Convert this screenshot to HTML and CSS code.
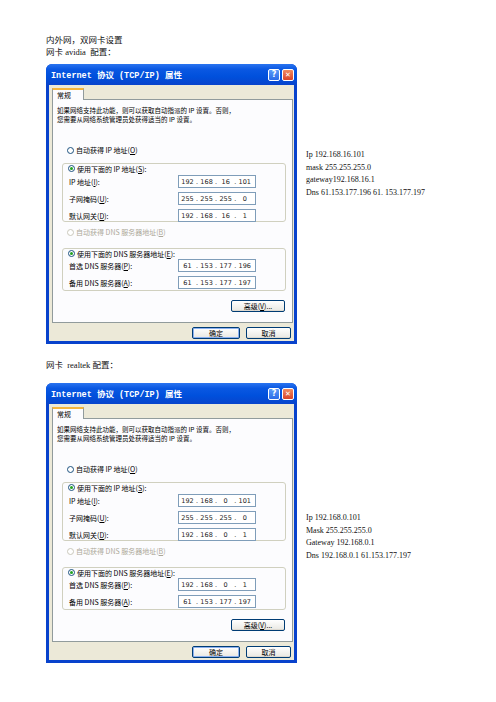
FILE: index.html
```html
<!DOCTYPE html>
<html lang="zh-CN">
<head>
  <meta charset="UTF-8" />
  <title>内外网，双网卡设置</title>
  <link rel="stylesheet" href="styles.css">
</head>
<body>
  <div class="doc">
    <p class="line">内外网，双网卡设置</p>
    <p class="line">网卡 avidia &nbsp;配置：</p>

    <!-- 第一块网卡 -->
    <div class="shot">
      <div class="win">
        <div class="title">
          <span>Internet 协议 (TCP/IP) 属性</span>
          <span class="tbtns"><span class="tb help">?</span><span class="tb close">✕</span></span>
        </div>
        <div class="body">
          <div class="tab">常规</div>
          <div class="panel">
            <p class="desc">如果网络支持此功能，则可以获取自动指派的 IP 设置。否则，</p>
            <p class="desc">您需要从网络系统管理员处获得适当的 IP 设置。</p>
            <div class="radio first"><i></i><span>自动获得 IP 地址(<u>O</u>)</span></div>
            <div class="group g1">
              <div class="radio legend"><i class="on"></i><span>使用下面的 IP 地址(<u>S</u>):</span></div>
              <div class="rows">
                <div class="row"><span class="lbl">IP 地址(<u>I</u>):</span><span class="ip"><b>192</b>.<b>168</b>.<b>16</b>.<b>101</b></span></div>
                <div class="row"><span class="lbl">子网掩码(<u>U</u>):</span><span class="ip"><b>255</b>.<b>255</b>.<b>255</b>.<b>0</b></span></div>
                <div class="row"><span class="lbl">默认网关(<u>D</u>):</span><span class="ip"><b>192</b>.<b>168</b>.<b>16</b>.<b>1</b></span></div>
              </div>
            </div>
            <div class="radio off dns-auto"><i></i><span>自动获得 DNS 服务器地址(<u>B</u>)</span></div>
            <div class="group g2">
              <div class="radio legend"><i class="on"></i><span>使用下面的 DNS 服务器地址(<u>E</u>):</span></div>
              <div class="rows">
                <div class="row"><span class="lbl">首选 DNS 服务器(<u>P</u>):</span><span class="ip"><b>61</b>.<b>153</b>.<b>177</b>.<b>196</b></span></div>
                <div class="row"><span class="lbl">备用 DNS 服务器(<u>A</u>):</span><span class="ip"><b>61</b>.<b>153</b>.<b>177</b>.<b>197</b></span></div>
              </div>
            </div>
            <div class="adv-wrap"><span class="btn adv"><span>高级(<u>V</u>)...</span></span></div>
          </div>
          <div class="footer">
            <span class="btn ok">确定</span>
            <span class="btn">取消</span>
          </div>
        </div>
      </div>
      <div class="notes notes-a">
        <p>Ip 192.168.16.101</p>
        <p>mask 255.255.255.0</p>
        <p>gateway192.168.16.1</p>
        <p>Dns 61.153.177.196 61. 153.177.197</p>
      </div>
    </div>

    <p class="line caption2">网卡 &nbsp;realtek 配置：</p>

    <!-- 第二块网卡 -->
    <div class="shot">
      <div class="win">
        <div class="title">
          <span>Internet 协议 (TCP/IP) 属性</span>
          <span class="tbtns"><span class="tb help">?</span><span class="tb close">✕</span></span>
        </div>
        <div class="body">
          <div class="tab">常规</div>
          <div class="panel">
            <p class="desc">如果网络支持此功能，则可以获取自动指派的 IP 设置。否则，</p>
            <p class="desc">您需要从网络系统管理员处获得适当的 IP 设置。</p>
            <div class="radio first"><i></i><span>自动获得 IP 地址(<u>O</u>)</span></div>
            <div class="group g1">
              <div class="radio legend"><i class="on"></i><span>使用下面的 IP 地址(<u>S</u>):</span></div>
              <div class="rows">
                <div class="row"><span class="lbl">IP 地址(<u>I</u>):</span><span class="ip"><b>192</b>.<b>168</b>.<b>0</b>.<b>101</b></span></div>
                <div class="row"><span class="lbl">子网掩码(<u>U</u>):</span><span class="ip"><b>255</b>.<b>255</b>.<b>255</b>.<b>0</b></span></div>
                <div class="row"><span class="lbl">默认网关(<u>D</u>):</span><span class="ip"><b>192</b>.<b>168</b>.<b>0</b>.<b>1</b></span></div>
              </div>
            </div>
            <div class="radio off dns-auto"><i></i><span>自动获得 DNS 服务器地址(<u>B</u>)</span></div>
            <div class="group g2">
              <div class="radio legend"><i class="on"></i><span>使用下面的 DNS 服务器地址(<u>E</u>):</span></div>
              <div class="rows">
                <div class="row"><span class="lbl">首选 DNS 服务器(<u>P</u>):</span><span class="ip"><b>192</b>.<b>168</b>.<b>0</b>.<b>1</b></span></div>
                <div class="row"><span class="lbl">备用 DNS 服务器(<u>A</u>):</span><span class="ip"><b>61</b>.<b>153</b>.<b>177</b>.<b>197</b></span></div>
              </div>
            </div>
            <div class="adv-wrap"><span class="btn adv"><span>高级(<u>V</u>)...</span></span></div>
          </div>
          <div class="footer">
            <span class="btn ok">确定</span>
            <span class="btn">取消</span>
          </div>
        </div>
      </div>
      <div class="notes notes-b">
        <p>Ip 192.168.0.101</p>
        <p>Mask 255.255.255.0</p>
        <p>Gateway 192.168.0.1</p>
        <p>Dns 192.168.0.1 61.153.177.197</p>
      </div>
    </div>
  </div>
</body>
</html>
```

FILE: styles.css
```css
body {
  margin: 0;
  background: #fff;
  font-family: "Liberation Serif", "Noto Sans CJK SC", serif;
  color: #111;
}

p {
  margin: 0;
}

.doc {
  padding: 34px 0 0 46px;
}

.line {
  font-size: 8.5px;
  line-height: 12px;
  height: 12px;
  white-space: nowrap;
}

.caption2 {
  margin-top: 15px;
}

.shot {
  display: flex;
  align-items: flex-start;
  margin-top: 6px;
}

.caption2 + .shot {
  margin-top: 12px;
}

/* 右侧说明 */
.notes {
  margin-left: 9px;
  font-size: 8px;
  line-height: 12.5px;
  white-space: nowrap;
}
.notes-a {
  padding-top: 85px;
}
.notes-b {
  padding-top: 129px;
}

/* XP 对话框 */
.win {
  width: 251px;
  height: 280px;
  box-sizing: border-box;
  background: #0842cc;
  border-radius: 6px 6px 0 0;
  padding: 0 3px 3px;
  display: flex;
  flex-direction: column;
  font-family: "Noto Sans CJK SC", "DejaVu Sans", sans-serif;
  font-size: 7px;
  color: #000;
}

.title {
  height: 21px;
  margin: 0 -3px;
  padding: 0 3px 0 5px;
  border-radius: 6px 6px 0 0;
  background: linear-gradient(#2a74f0 0%, #0a58e2 25%, #0050dc 60%, #0844cc 100%);
  color: #fff;
  font-family: "Liberation Mono", "Noto Sans CJK SC", monospace;
  font-weight: bold;
  font-size: 8.5px;
  display: flex;
  align-items: center;
  justify-content: space-between;
  white-space: nowrap;
}

.tbtns {
  display: flex;
  gap: 2px;
}

.tb {
  width: 12px;
  height: 12px;
  box-sizing: border-box;
  border: 1px solid #fff;
  border-radius: 2px;
  display: flex;
  align-items: center;
  justify-content: center;
  font-family: "DejaVu Sans", sans-serif;
  font-size: 8px;
  font-weight: bold;
  color: #fff;
}

.help {
  background: linear-gradient(#5a9af8, #2a6ae8);
}

.close {
  background: linear-gradient(#f08a60, #d8442a);
  font-size: 7px;
}

.body {
  flex: 1;
  background: #ece9d8;
  padding: 2px 3px 0 3px;
}

.tab {
  width: 32px;
  height: 12px;
  box-sizing: border-box;
  border: 1px solid #919b9c;
  border-top: 2px solid #f5b53c;
  border-bottom: none;
  background: #fcfcfe;
  padding-left: 4px;
  font-size: 7px;
  line-height: 10px;
  position: relative;
  top: 1px;
}

.panel {
  width: 241px;
  height: 224px;
  box-sizing: border-box;
  border: 1px solid #919b9c;
  background: #fcfcfe;
}

.desc {
  padding-left: 4px;
  font-size: 6.5px;
  line-height: 9px;
  height: 9px;
  white-space: nowrap;
}

.desc:first-child {
  margin-top: 6px;
}

.radio {
  height: 10px;
  display: flex;
  align-items: center;
  gap: 2px;
  white-space: nowrap;
}

.radio i {
  width: 7px;
  height: 7px;
  box-sizing: border-box;
  border: 1px solid #1c5180;
  border-radius: 50%;
  background: #fff;
  position: relative;
}

.radio i.on::after {
  content: "";
  position: absolute;
  left: 1px;
  top: 1px;
  width: 3px;
  height: 3px;
  border-radius: 50%;
  background: #21a121;
}

.radio.off {
  color: #aca899;
}
.radio.off i {
  border-color: #cac8bb;
}

.first {
  margin: 21px 0 0 14px;
}

.group {
  margin-left: 9px;
  width: 224px;
  box-sizing: border-box;
  border: 1px solid #d0d0bf;
  border-radius: 3px;
}

.g1 {
  margin-top: 8px;
  height: 59px;
}

.g2 {
  margin-top: 11px;
  height: 43px;
}

.legend {
  display: inline-flex;
  margin: -6px 0 0 4px;
  padding: 0 2px 0 1px;
  background: #fcfcfe;
}

.dns-auto {
  margin: 5px 0 0 14px;
}

.rows {
  display: flex;
  flex-direction: column;
  gap: 4px;
  padding-top: 1px;
}

.g2 .rows {
  padding-top: 0;
}

.row {
  display: flex;
  align-items: center;
  height: 13px;
}

.lbl {
  width: 109px;
  padding-left: 6px;
  white-space: nowrap;
}

.ip {
  width: 78px;
  height: 13px;
  box-sizing: border-box;
  border: 1px solid #7f9db9;
  background: #fff;
  display: flex;
  align-items: center;
  font-family: "DejaVu Sans", sans-serif;
  font-size: 6.5px;
  color: #222;
}

.ip b {
  font-weight: normal;
  width: 17px;
  text-align: center;
}

.adv-wrap {
  display: flex;
  justify-content: flex-end;
  margin: 9px 7px 0 0;
}

.btn {
  height: 12px;
  box-sizing: border-box;
  border: 1px solid #003c74;
  border-radius: 2px;
  background: linear-gradient(#fff, #ecebe6 85%, #d6d0c5);
  display: inline-flex;
  align-items: center;
  justify-content: center;
  white-space: nowrap;
  font-size: 7px;
}

.adv {
  width: 54px;
}

.footer {
  display: flex;
  justify-content: flex-end;
  gap: 6px;
  margin-top: 4px;
}

.footer .btn {
  width: 45px;
}

.footer .ok {
  width: 48px;
  box-shadow: inset 0 0 0 1px #8bb0f0;
}
```
